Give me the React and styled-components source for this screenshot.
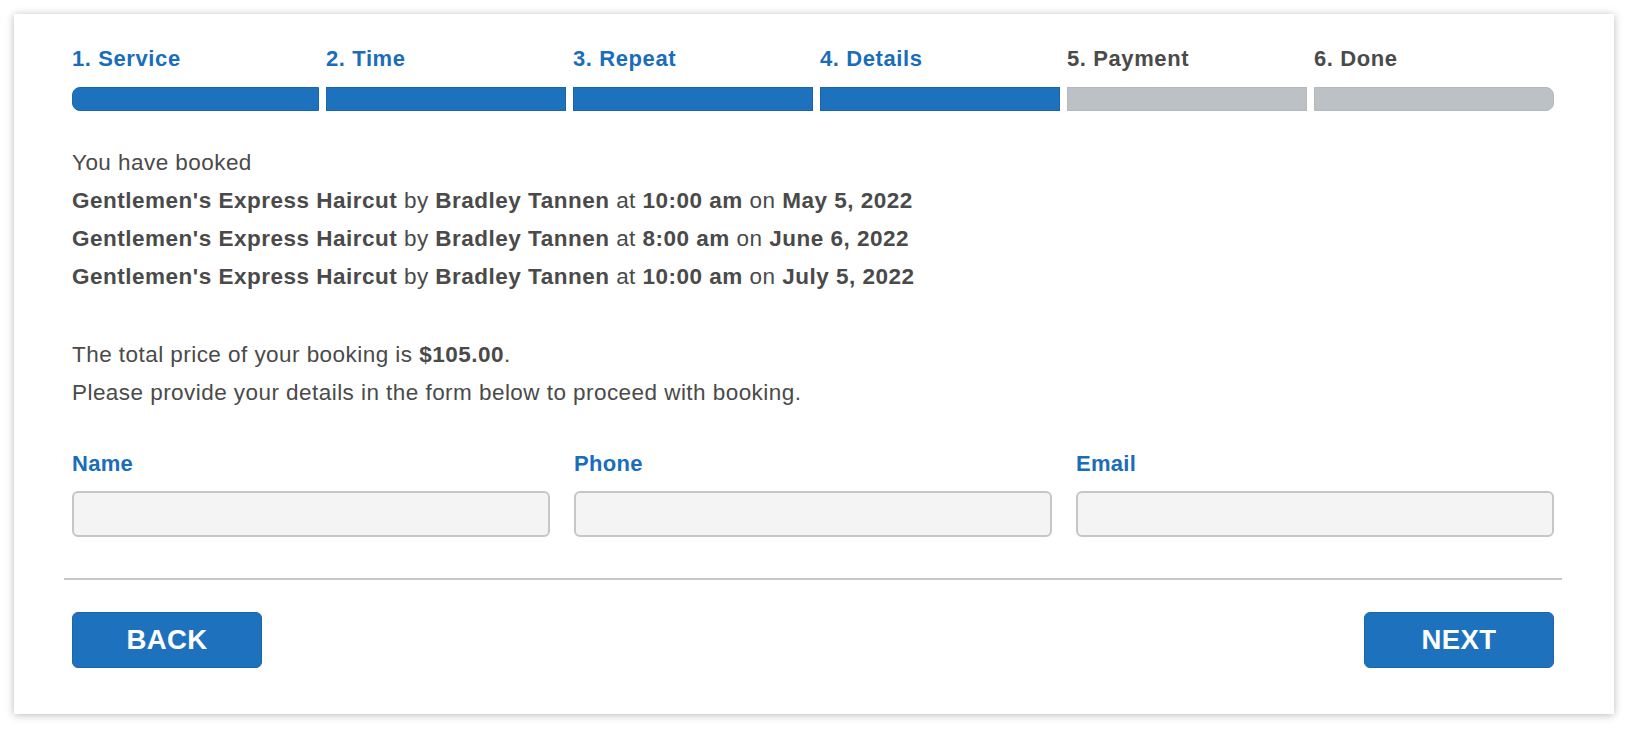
import styled, { createGlobalStyle } from "styled-components";

const GlobalStyle = createGlobalStyle`
  * { box-sizing: border-box; }
  body {
    margin: 0;
    padding: 14px;
    background: #ffffff;
    font-family: "Liberation Sans", Arial, sans-serif;
    color: #4a4a4a;
  }
`;

const Card = styled.div`
  background: #fff;
  box-shadow: 0 1px 8px rgba(0, 0, 0, 0.28);
  padding: 32px 60px 46px 58px;
`;

const Steps = styled.div`
  display: grid;
  grid-template-columns: 247px repeat(5, 1fr);
  column-gap: 7px;
`;

const Step = styled.div`
  display: flex;
  flex-direction: column;
  gap: 15px;
`;

const StepLabel = styled.div`
  font-size: 22px;
  line-height: 26px;
  font-weight: 700;
  letter-spacing: 0.6px;
  color: ${(p) => (p.active ? "#1a6dbb" : "#4a4a4a")};
`;

const Bar = styled.div`
  height: 24px;
  background: ${(p) => (p.active ? "#1e72bd" : "#bcc1c5")};
  border: 1px solid ${(p) => (p.active ? "#1a66ab" : "#b4b9bd")};
  border-radius: ${(p) =>
    p.first ? "8px 0 0 8px" : p.last ? "0 8px 8px 0" : "0"};
`;

const Summary = styled.div`
  margin-top: 33px;
  font-size: 22.5px;
  line-height: 38px;
  letter-spacing: 0.45px;
`;

const Line = styled.div``;

const Strong = styled.b`
  font-weight: 700;
  letter-spacing: 0.5px;
`;

const Gap = styled.div`
  height: 40px;
`;

const Fields = styled.div`
  margin-top: 39px;
  display: grid;
  grid-template-columns: repeat(3, 1fr);
  column-gap: 24px;
`;

const Field = styled.label`
  display: flex;
  flex-direction: column;
  gap: 14px;
`;

const FieldLabel = styled.span`
  font-size: 22px;
  line-height: 26px;
  font-weight: 700;
  letter-spacing: 0.3px;
  color: #1a6dbb;
`;

const Input = styled.input`
  height: 46px;
  background: #f4f4f4;
  border: 2px solid #c6c6c6;
  border-radius: 6px;
  padding: 0 12px;
  font: inherit;
  font-size: 20px;
  outline: none;
`;

const Divider = styled.hr`
  margin: 41px -8px 0;
  border: none;
  border-top: 2px solid #c8c8c8;
`;

const Footer = styled.div`
  margin-top: 32px;
  display: flex;
  justify-content: space-between;
`;

const Button = styled.button`
  width: 190px;
  height: 56px;
  border: 1px solid #1a66ab;
  border-radius: 6px;
  background: #1e72bd;
  color: #fff;
  font-family: "Liberation Sans", Arial, sans-serif;
  font-size: 27.5px;
  font-weight: 700;
  letter-spacing: 0.4px;
  cursor: pointer;
`;

const steps = [
  { label: "1. Service", active: true },
  { label: "2. Time", active: true },
  { label: "3. Repeat", active: true },
  { label: "4. Details", active: true },
  { label: "5. Payment", active: false },
  { label: "6. Done", active: false },
];

const bookings = [
  { time: "10:00 am", date: "May 5, 2022" },
  { time: "8:00 am", date: "June 6, 2022" },
  { time: "10:00 am", date: "July 5, 2022" },
];

const App = () => {
  return (
    <>
      <GlobalStyle />
      <Card>
        <Steps>
          {steps.map((s, i) => (
            <Step key={s.label}>
              <StepLabel active={s.active}>{s.label}</StepLabel>
              <Bar
                active={s.active}
                first={i === 0}
                last={i === steps.length - 1}
              />
            </Step>
          ))}
        </Steps>

        <Summary>
          <Line>You have booked</Line>
          {bookings.map((b) => (
            <Line key={b.date}>
              <Strong>Gentlemen's Express Haircut</Strong> by{" "}
              <Strong>Bradley Tannen</Strong> at <Strong>{b.time}</Strong> on{" "}
              <Strong>{b.date}</Strong>
            </Line>
          ))}
          <Gap />
          <Line>
            The total price of your booking is <Strong>$105.00</Strong>.
          </Line>
          <Line>
            Please provide your details in the form below to proceed with
            booking.
          </Line>
        </Summary>

        <Fields>
          <Field>
            <FieldLabel>Name</FieldLabel>
            <Input type="text" />
          </Field>
          <Field>
            <FieldLabel>Phone</FieldLabel>
            <Input type="tel" />
          </Field>
          <Field>
            <FieldLabel>Email</FieldLabel>
            <Input type="email" />
          </Field>
        </Fields>

        <Divider />

        <Footer>
          <Button>BACK</Button>
          <Button>NEXT</Button>
        </Footer>
      </Card>
    </>
  );
};

export default App;
